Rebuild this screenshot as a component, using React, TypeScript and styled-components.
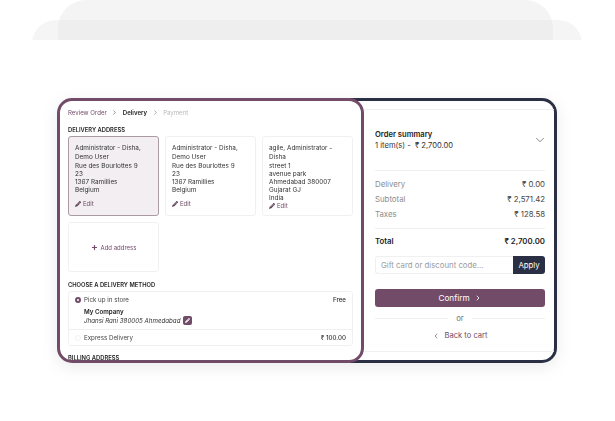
import styled, { createGlobalStyle } from 'styled-components';
import { ChevronDown, ChevronLeft, ChevronRight, Plus } from 'lucide-react';
import { FaPencilAlt } from 'react-icons/fa';

const PLUM = '#714b67';
const NAVY = '#2b2f43';
const LINE = '#f0f0f0';

const addresses = [
  {
    lines: ['Administrator - Disha,', 'Demo User'],
    rest: ['Rue des Bourlottes 9', '23', '1367 Ramillies', 'Belgium'],
    selected: true,
  },
  {
    lines: ['Administrator - Disha,', 'Demo User'],
    rest: ['Rue des Bourlottes 9', '23', '1367 Ramillies', 'Belgium'],
    selected: false,
  },
  {
    lines: ['agile, Administrator -', 'Disha'],
    rest: ['street 1', 'avenue park', 'Ahmedabad 380007', 'Gujarat GJ', 'India'],
    selected: false,
  },
];

const App = () => {
  return (
    <Page>
      <GlobalStyle />
      <Decor>
        <BackTab />
        <FrontTab />
      </Decor>
      <Frame>
        <CheckoutPanel>
          <Breadcrumb>
            <Crumb>Review Order</Crumb>
            <ChevronRight size={7} color="#555" />
            <Crumb $active>Delivery</Crumb>
            <ChevronRight size={7} color="#777" />
            <Crumb $muted>Payment</Crumb>
          </Breadcrumb>
          <Heading>DELIVERY ADDRESS</Heading>
          <AddressGrid>
            {addresses.map((address, i) => (
              <AddressCard key={i} $selected={address.selected}>
                <AddressName>
                  {address.lines.map((line) => (
                    <div key={line}>{line}</div>
                  ))}
                </AddressName>
                <AddressLines>
                  {address.rest.map((line) => (
                    <div key={line}>{line}</div>
                  ))}
                </AddressLines>
                <EditLink>
                  <FaPencilAlt size={6} color="#5b3f55" />
                  Edit
                </EditLink>
              </AddressCard>
            ))}
            <AddCard>
              <Plus size={7} color={PLUM} strokeWidth={4} />
              <span>Add address</span>
            </AddCard>
          </AddressGrid>
          <Heading>CHOOSE A DELIVERY METHOD</Heading>
          <MethodBox>
            <MethodRow>
              <MethodMain>
                <Radio $checked />
                <span>Pick up in store</span>
              </MethodMain>
              <Price>Free</Price>
            </MethodRow>
            <StoreInfo>
              <StoreName>My Company</StoreName>
              <StoreAddress>
                <em>Jhansi Rani 380005 Ahmedabad</em>
                <StoreEdit>
                  <FaPencilAlt size={5} color="#fff" />
                </StoreEdit>
              </StoreAddress>
            </StoreInfo>
            <MethodRow $divided>
              <MethodMain>
                <Radio />
                <span>Express Delivery</span>
              </MethodMain>
              <Price>₹ 100.00</Price>
            </MethodRow>
          </MethodBox>
          <BillingHeading>BILLING ADDRESS</BillingHeading>
        </CheckoutPanel>
        <SummaryPanel>
          <SummaryInner>
            <SummaryHead>
              <div>
                <SummaryTitle>Order summary</SummaryTitle>
                <SummaryCount>1 item(s) - &nbsp;₹ 2,700.00</SummaryCount>
              </div>
              <SummaryToggle>
                <ChevronDown size={14} color="#444" strokeWidth={1.1} />
              </SummaryToggle>
            </SummaryHead>
            <Totals>
              <TotalRow>
                <span>Delivery</span>
                <strong>₹ 0.00</strong>
              </TotalRow>
              <TotalRow>
                <span>Subtotal</span>
                <strong>₹ 2,571.42</strong>
              </TotalRow>
              <TotalRow>
                <span>Taxes</span>
                <strong>₹ 128.58</strong>
              </TotalRow>
            </Totals>
            <GrandTotal>
              <span>Total</span>
              <span>₹ 2,700.00</span>
            </GrandTotal>
            <CouponForm>
              <CouponInput>Gift card or discount code...</CouponInput>
              <ApplyButton>Apply</ApplyButton>
            </CouponForm>
            <ConfirmButton>
              Confirm
              <ChevronRight size={8} strokeWidth={2.5} />
            </ConfirmButton>
            <OrDivider>or</OrDivider>
            <BackLink>
              <ChevronLeft size={8} />
              Back to cart
            </BackLink>
          </SummaryInner>
        </SummaryPanel>
      </Frame>
    </Page>
  );
};

const GlobalStyle = createGlobalStyle`
  html, body {
    margin: 0;
    padding: 0;
    background: #fff;
  }
  body {
    font-family: Inter, 'Liberation Sans', sans-serif;
  }
`;

const Page = styled.div`
  width: 615px;
  height: 421px;
  overflow: hidden;
  background: #fff;
`;

const Decor = styled.div`
  display: grid;
  height: 40px;
  padding: 0 33px 0 32px;
  overflow: hidden;
`;

const BackTab = styled.div`
  grid-area: 1 / 1;
  margin: 0 29px 0 26px;
  background: #f4f4f4;
  border-radius: 28px 28px 0 0;
`;

const FrontTab = styled.div`
  grid-area: 1 / 1;
  margin-top: 20px;
  height: 40px;
  background: rgba(228, 228, 228, 0.38);
  border-radius: 24px 24px 0 0;
`;

const Frame = styled.div`
  display: flex;
  width: 500px;
  height: 265px;
  margin: 58px 0 0 57px;
  filter: drop-shadow(0 4px 8px rgba(0, 0, 0, 0.08));
`;

const CheckoutPanel = styled.div`
  position: relative;
  z-index: 1;
  flex: 0 0 307px;
  box-sizing: border-box;
  padding: 6px 8px 0;
  border: 3px solid ${PLUM};
  border-radius: 15px;
  background: #fff;
  overflow: hidden;
`;

const Breadcrumb = styled.div`
  display: flex;
  align-items: center;
  gap: 4.5px;
  height: 10px;
  font-size: 6.1px;
`;

const Crumb = styled.span<{ $active?: boolean; $muted?: boolean }>`
  color: ${({ $active, $muted }) => ($active ? '#222' : $muted ? '#b8b8b8' : PLUM)};
  font-weight: ${({ $active }) => ($active ? 600 : 400)};
`;

const Heading = styled.div`
  margin-top: 8px;
  font-size: 5.8px;
  line-height: 9px;
  font-weight: 600;
  color: #222;
`;

const BillingHeading = styled(Heading)`
  margin-top: 7px;
`;

const AddressGrid = styled.div`
  display: grid;
  grid-template-columns: repeat(3, 91px);
  grid-template-rows: 80px 50px;
  gap: 6px;
  margin-top: 2px;
  margin-bottom: 3px;
`;

const AddressCard = styled.div<{ $selected?: boolean }>`
  display: flex;
  flex-direction: column;
  box-sizing: border-box;
  padding: 7px 6px 7px;
  font-size: 6.4px;
  line-height: 8px;
  color: #333;
  border: 1px solid ${({ $selected }) => ($selected ? '#a99aa6' : LINE)};
  border-radius: 3px;
  background: ${({ $selected }) => ($selected ? '#f2eef1' : '#fff')};
`;

const AddressName = styled.div`
  line-height: 9px;
`;

const AddressLines = styled.div`
  margin-top: 0;
`;

const EditLink = styled.div`
  display: flex;
  align-items: center;
  gap: 2px;
  margin-top: auto;
  font-size: 6px;
  line-height: 8px;
  color: ${PLUM};
`;

const AddCard = styled.div`
  display: flex;
  align-items: center;
  justify-content: center;
  gap: 3px;
  font-size: 6px;
  color: ${PLUM};
  border: 1px solid ${LINE};
  border-radius: 3px;
`;

const MethodBox = styled.div`
  margin-top: 2px;
  border: 1px solid ${LINE};
  border-radius: 3px;
`;

const MethodRow = styled.div<{ $divided?: boolean }>`
  display: flex;
  align-items: center;
  justify-content: space-between;
  height: 15px;
  padding: 0 6px;
  font-size: 6.2px;
  color: #444;
  border-top: ${({ $divided }) => ($divided ? `1px solid ${LINE}` : 'none')};
`;

const MethodMain = styled.div`
  display: flex;
  align-items: center;
  gap: 3px;
`;

const Radio = styled.span<{ $checked?: boolean }>`
  box-sizing: border-box;
  width: 6px;
  height: 6px;
  border-radius: 50%;
  background: #fff;
  border: ${({ $checked }) => ($checked ? `2px solid ${PLUM}` : `1px solid ${LINE}`)};
`;

const Price = styled.span`
  font-weight: 500;
  color: #333;
`;

const StoreInfo = styled.div`
  padding: 0 6px 4px 15px;
  font-size: 6.2px;
  line-height: 9px;
`;

const StoreName = styled.div`
  font-weight: 600;
  color: #222;
`;

const StoreAddress = styled.div`
  display: flex;
  align-items: center;
  gap: 3px;
  color: #333;
`;

const StoreEdit = styled.span`
  display: flex;
  align-items: center;
  justify-content: center;
  width: 9px;
  height: 9px;
  border-radius: 2px;
  background: ${PLUM};
`;

const SummaryPanel = styled.div`
  flex: 1;
  box-sizing: border-box;
  margin-left: -14px;
  padding: 8px 0 8px 14px;
  border: 3px solid ${NAVY};
  border-left: none;
  border-radius: 0 15px 15px 0;
  background: #fff;
`;

const SummaryInner = styled.div`
  height: 100%;
  box-sizing: border-box;
  padding: 0 9px 0 11px;
  border-top: 1px solid ${LINE};
  border-bottom: 1px solid ${LINE};
`;

const SummaryHead = styled.div`
  display: flex;
  align-items: center;
  justify-content: space-between;
  height: 60px;
  border-bottom: 1px solid ${LINE};
`;

const SummaryToggle = styled.span`
  display: flex;
  margin-right: -2px;
`;

const SummaryTitle = styled.div`
  font-size: 7.6px;
  line-height: 11px;
  font-weight: 600;
  color: #222;
`;

const SummaryCount = styled.div`
  font-size: 7.6px;
  line-height: 12px;
  color: #333;
`;

const Totals = styled.div`
  padding: 5px 0 7px;
  border-bottom: 1px solid ${LINE};
`;

const TotalRow = styled.div`
  display: flex;
  justify-content: space-between;
  height: 15px;
  align-items: center;
  font-size: 7.8px;
  color: #8c8c8c;

  strong {
    font-weight: 400;
    color: #444;
  }
`;

const GrandTotal = styled.div`
  display: flex;
  align-items: center;
  justify-content: space-between;
  height: 23px;
  font-size: 7.8px;
  font-weight: 600;
  color: #222;
`;

const CouponForm = styled.div`
  display: flex;
  height: 18px;
  margin-top: 4px;
`;

const CouponInput = styled.div`
  flex: 1;
  display: flex;
  align-items: center;
  padding-left: 5px;
  font-size: 7.8px;
  color: #9c9c9c;
  border: 1px solid ${LINE};
  border-right: none;
  border-radius: 3px 0 0 3px;
`;

const ApplyButton = styled.div`
  display: flex;
  align-items: center;
  justify-content: center;
  width: 32px;
  font-size: 7.8px;
  color: #fff;
  background: ${NAVY};
  border-radius: 0 3px 3px 0;
`;

const ConfirmButton = styled.div`
  display: flex;
  align-items: center;
  justify-content: center;
  gap: 4px;
  height: 18px;
  margin-top: 15px;
  font-size: 8.2px;
  color: #fff;
  background: ${PLUM};
  border-radius: 3px;
`;

const OrDivider = styled.div`
  display: flex;
  align-items: center;
  gap: 8px;
  margin-top: 6px;
  font-size: 7.8px;
  line-height: 11px;
  color: #777;

  &::before,
  &::after {
    content: '';
    flex: 1;
    height: 1px;
    background: ${LINE};
  }
`;

const BackLink = styled.div`
  display: flex;
  align-items: center;
  justify-content: center;
  gap: 4px;
  margin-top: 6px;
  font-size: 7.6px;
  line-height: 11px;
  color: ${PLUM};
`;

export default App;
